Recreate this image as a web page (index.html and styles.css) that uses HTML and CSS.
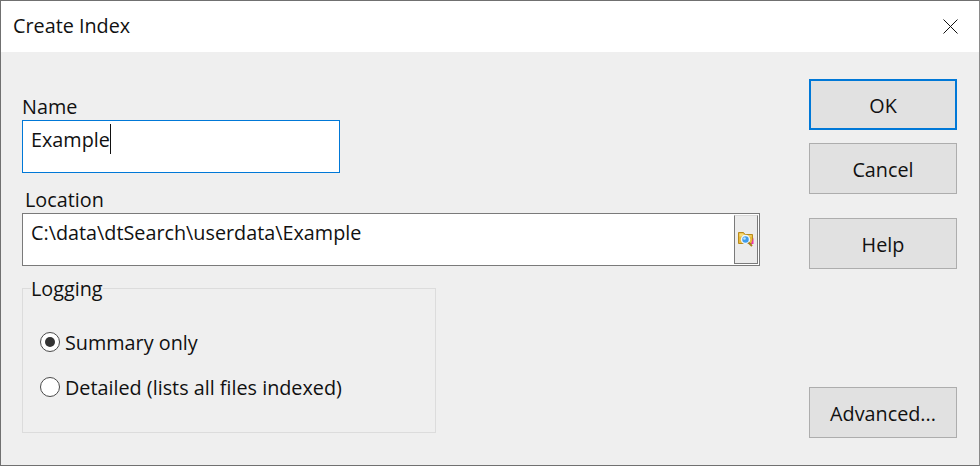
FILE: index.html
```html
<!DOCTYPE html>
<html lang="en">
<head>
<meta charset="utf-8">
<title>Create Index</title>
<link rel="stylesheet" href="styles.css">
</head>
<body>
<div class="dialog">
  <header class="titlebar">
    <span class="title">Create Index</span>
    <svg class="close" width="15" height="15" viewBox="0 0 15 15"><path d="M0.5 0.5L14.500 14.500M14.500 0.5L0.5 14.500" stroke="#111" stroke-width="1" fill="none"/></svg>
  </header>
  <main class="content">
    <div class="form">
      <div class="label name-label">Name</div>
      <div class="name-input"><span>Example</span><i class="caret"></i></div>
      <div class="label location-label">Location</div>
      <div class="location-input">
        <span class="location-text">C:\data\dtSearch\userdata\Example</span>
        <div class="browse">
          <svg width="18" height="17" viewBox="0 0 18 17">
            <path d="M1.500 1.500h5l1.500 2h7.500v9h-14z" fill="#e8b93c" stroke="#b88a1c"/>
            <path d="M2.500 2.500h3.500l1.500 2h7v1h-12z" fill="#f7dc7c"/>
            <path d="M16.500 6.500v6.500h-2.500z" fill="#e838a8"/>
            <circle cx="8.500" cy="8.500" r="4" fill="#3f9cec" stroke="#eef6fc" stroke-width="1.500"/>
            <circle cx="7.500" cy="7.500" r="1.300" fill="#bfe2fa"/>
            <path d="M11.500 11.500l3.500 3.500" stroke="#a87c18" stroke-width="2"/>
          </svg>
        </div>
      </div>
      <fieldset class="logging">
        <legend>Logging</legend>
        <div class="radio-row first"><span class="radio checked"></span><span class="radio-text">Summary only</span></div>
        <div class="radio-row"><span class="radio"></span><span class="radio-text">Detailed (lists all files indexed)</span></div>
      </fieldset>
    </div>
    <div class="buttons">
      <div class="btn default">OK</div>
      <div class="btn">Cancel</div>
      <div class="btn help">Help</div>
      <div class="btn advanced">Advanced...</div>
    </div>
  </main>
</div>
</body>
</html>
```
FILE: styles.css
```css
* { box-sizing: border-box; }
html, body { margin: 0; padding: 0; }
body { width: 980px; height: 466px; overflow: hidden; background: #efefef; }
.dialog {
  width: 980px; height: 466px;
  border: 1px solid #707070;
  border-right-color: #8a8a8a;
  font: 19.8px/26px "Open Sans", "Noto Sans", sans-serif;
  color: #111;
  background: #efefef;
  display: flex; flex-direction: column;
}
.titlebar {
  height: 51px; flex: none; background: #fff;
  display: flex; align-items: center; justify-content: space-between;
  padding: 0 21px 2px 12px;
}
.close { display: block; margin-top: 1px; }
.content { display: flex; padding: 27px 22px 0 21px; gap: 49px; }
.form { width: 738px; display: flex; flex-direction: column; }
.label { height: 26px; }
.name-label { padding-left: 0; margin-top: 15px; height: 26px; }
.name-input {
  width: 318px; height: 53px; margin-top: 0;
  border: 1px solid #0078d7; background: #fff;
  padding: 6px 0 0 8px; display: flex; align-items: flex-start;
}
.caret { display: block; width: 1px; height: 30px; background: #111; margin: -3px 0 0 0; }
.location-label { padding-left: 3px; margin-top: 14px; }
.location-input {
  height: 53px; margin-top: 0; border: 1px solid #7a7a7a; background: #fff;
  display: flex; justify-content: space-between; padding: 1px 1px 1px 8px;
}
.location-text { padding-top: 5px; }
.browse {
  width: 24px; height: 49px;
  border: 1px solid #7a7a7a; border-top-color: #d8d8d8;
  background: #ececec;
  display: flex; align-items: center; justify-content: center;
}
.logging {
  width: 414px; height: 157px; margin: 10px 0 0; padding: 0 0 0 17px;
  border: 1px solid #dcdcdc;
}
.logging legend { padding: 0; margin-left: -9px; line-height: 26px; height: 24px; }
.radio-row { display: flex; align-items: center; height: 26px; gap: 5px; margin-top: 19px; }
.radio-row.first { margin-top: 29px; }
.radio-text { padding-top: 2px; }
.radio {
  width: 20px; height: 20px; border-radius: 50%;
  border: 1px solid #4a4a4a; background: #fff;
  display: flex; align-items: center; justify-content: center; flex: none;
}
.radio.checked::after { content: ""; width: 10px; height: 10px; border-radius: 50%; background: #333; }
.buttons { width: 148px; display: flex; flex-direction: column; }
.btn {
  height: 51px; border: 1px solid #adadad; background: #e1e1e1; padding-top: 2px;
  display: flex; align-items: center; justify-content: center;
}
.btn.default { border: 2px solid #0078d7; }
.btn + .btn { margin-top: 13px; }
.btn.help { margin-top: 24px; }
.btn.advanced { margin-top: 118px; }
```
